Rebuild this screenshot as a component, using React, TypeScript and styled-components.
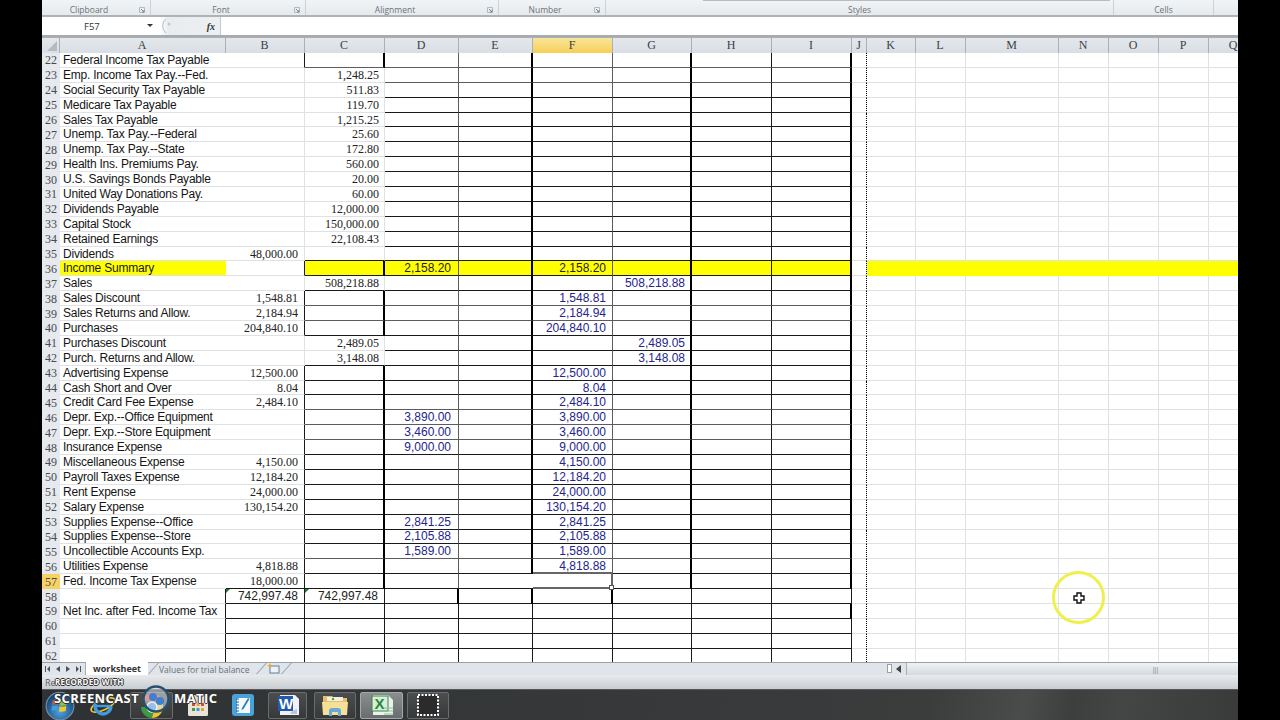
import styled, { createGlobalStyle, css } from "styled-components";

const COLUMNS =
  "18px 166px 79px 80px 74px 74px 80px 79px 80px 80px 15px 49px 50px 93px 50px 50px 50px 50px";
const ROW_HEIGHT = 14.9;

type Line = "none" | "light" | "thin" | "gray" | "wide" | "thick" | "dots";
type Ink = "label" | "serif" | "blue" | "sans";

interface RowData {
  n: number;
  a?: string;
  b?: string;
  c?: string;
  d?: string;
  f?: string;
  g?: string;
}

const rows: RowData[] = [
  { n: 22, a: "Federal Income Tax Payable" },
  { n: 23, a: "Emp. Income Tax Pay.--Fed.", c: "1,248.25" },
  { n: 24, a: "Social Security Tax Payable", c: "511.83" },
  { n: 25, a: "Medicare Tax Payable", c: "119.70" },
  { n: 26, a: "Sales Tax Payable", c: "1,215.25" },
  { n: 27, a: "Unemp. Tax Pay.--Federal", c: "25.60" },
  { n: 28, a: "Unemp. Tax Pay.--State", c: "172.80" },
  { n: 29, a: "Health Ins. Premiums Pay.", c: "560.00" },
  { n: 30, a: "U.S. Savings Bonds Payable", c: "20.00" },
  { n: 31, a: "United Way Donations Pay.", c: "60.00" },
  { n: 32, a: "Dividends Payable", c: "12,000.00" },
  { n: 33, a: "Capital Stock", c: "150,000.00" },
  { n: 34, a: "Retained Earnings", c: "22,108.43" },
  { n: 35, a: "Dividends", b: "48,000.00" },
  { n: 36, a: "Income Summary", d: "2,158.20", f: "2,158.20" },
  { n: 37, a: "Sales", c: "508,218.88", g: "508,218.88" },
  { n: 38, a: "Sales Discount", b: "1,548.81", f: "1,548.81" },
  { n: 39, a: "Sales Returns and Allow.", b: "2,184.94", f: "2,184.94" },
  { n: 40, a: "Purchases", b: "204,840.10", f: "204,840.10" },
  { n: 41, a: "Purchases Discount", c: "2,489.05", g: "2,489.05" },
  { n: 42, a: "Purch. Returns and Allow.", c: "3,148.08", g: "3,148.08" },
  { n: 43, a: "Advertising Expense", b: "12,500.00", f: "12,500.00" },
  { n: 44, a: "Cash Short and Over", b: "8.04", f: "8.04" },
  { n: 45, a: "Credit Card Fee Expense", b: "2,484.10", f: "2,484.10" },
  { n: 46, a: "Depr. Exp.--Office Equipment", d: "3,890.00", f: "3,890.00" },
  { n: 47, a: "Depr. Exp.--Store Equipment", d: "3,460.00", f: "3,460.00" },
  { n: 48, a: "Insurance Expense", d: "9,000.00", f: "9,000.00" },
  { n: 49, a: "Miscellaneous Expense", b: "4,150.00", f: "4,150.00" },
  { n: 50, a: "Payroll Taxes Expense", b: "12,184.20", f: "12,184.20" },
  { n: 51, a: "Rent Expense", b: "24,000.00", f: "24,000.00" },
  { n: 52, a: "Salary Expense", b: "130,154.20", f: "130,154.20" },
  { n: 53, a: "Supplies Expense--Office", d: "2,841.25", f: "2,841.25" },
  { n: 54, a: "Supplies Expense--Store", d: "2,105.88", f: "2,105.88" },
  { n: 55, a: "Uncollectible Accounts Exp.", d: "1,589.00", f: "1,589.00" },
  { n: 56, a: "Utilities Expense", b: "4,818.88", f: "4,818.88" },
  { n: 57, a: "Fed. Income Tax Expense", b: "18,000.00" },
  { n: 58, b: "742,997.48", c: "742,997.48" },
  { n: 59, a: "Net Inc. after Fed. Income Tax" },
  { n: 60 },
  { n: 61 },
  { n: 62 },
];

const headers = ["A", "B", "C", "D", "E", "F", "G", "H", "I", "J", "K", "L", "M", "N", "O", "P", "Q"];
const ribbonGroups = [
  { label: "Clipboard", width: 109, launcher: true },
  { label: "Font", width: 155, launcher: true },
  { label: "Alignment", width: 193, launcher: true },
  { label: "Number", width: 107, launcher: true },
  { label: "Styles", width: 508, launcher: false },
  { label: "Cells", width: 100, launcher: false },
];

const GlobalStyle = createGlobalStyle`
  html, body {
    margin: 0;
    height: 720px;
    overflow: hidden;
    background: #000;
  }
`;

const lineCss = (line: Line) => {
  switch (line) {
    case "light":
      return "1px solid #dfe1e3";
    case "thin":
      return "1px solid #1a1a1a";
    case "gray":
      return "1px solid #5c5c5c";
    case "wide":
      return "2px solid #666";
    case "thick":
      return "2px solid #000";
    case "dots":
      return "1px dotted #000";
    default:
      return "0 none";
  }
};

const Screen = styled.div`
  position: relative;
  display: flex;
  flex-direction: column;
  width: 1196px;
  height: 720px;
  margin-left: 42px;
  overflow: hidden;
  background: #fff;
`;

const Ribbon = styled.div`
  display: flex;
  flex: none;
  height: 15px;
  background: linear-gradient(#f1f4f6, #e6eaed);
  border-bottom: 2px solid #aeb3b8;
`;

const RibbonGroup = styled.div<{ $width: number; $launcher: boolean }>`
  display: flex;
  position: relative;
  align-items: center;
  justify-content: center;
  flex: none;
  width: ${(p) => p.$width}px;
  padding-top: 3px;
  padding-right: ${(p) => (p.$launcher ? 14 : 0)}px;
  box-sizing: border-box;
  border-right: 1px solid #cdd1d5;
  color: #6d7278;
  font: 8.5px "Open Sans", sans-serif;
`;

const Launcher = styled.svg`
  position: absolute;
  right: 5px;
  top: 7px;
  width: 6px;
  height: 6px;
`;

const GalleryEdge = styled.div`
  position: absolute;
  top: 0;
  left: 661px;
  width: 407px;
  height: 1px;
  background: #b9bdc1;
`;

const FormulaBar = styled.div`
  display: flex;
  flex: none;
  align-items: stretch;
  height: 18px;
  background: #fff;
  border-bottom: 2px solid #a7abb0;
`;

const NameBox = styled.div`
  display: flex;
  align-items: center;
  flex: none;
  width: 103px;
  padding-left: 42px;
  box-sizing: border-box;
  color: #333;
  font: 9.5px "Open Sans", sans-serif;
`;

const FormulaTools = styled.div`
  display: flex;
  align-items: center;
  justify-content: space-between;
  flex: none;
  width: 66px;
  padding: 0 5px 0 5px;
  box-sizing: border-box;
  background: linear-gradient(90deg, #fff 0, #fff 8%, #e9ecef 20%, #edf0f2 100%);
  border-right: 1px solid #c5c9cd;
  color: #333;
  font: italic 700 10px "Liberation Serif", serif;
`;

const HeaderRow = styled.div`
  display: grid;
  flex: none;
  grid-template-columns: ${COLUMNS};
  height: 16px;
`;

const HeaderCell = styled.div<{ $active?: boolean }>`
  display: flex;
  align-items: center;
  justify-content: center;
  padding-right: 1px;
  border-right: 1px solid #a9b0b8;
  border-top: 1px solid #a9b0b8;
  color: #3b3f45;
  font: 12px "Liberation Serif", serif;
  background: ${(p) =>
    p.$active ? "linear-gradient(#f9e59a, #f6cf57)" : "linear-gradient(#e4e8ec, #d9dee4)"};
`;

const Corner = styled(HeaderCell)`
  align-items: flex-end;
  justify-content: flex-end;
  padding: 0 2px 2px 0;
`;

const Sheet = styled.div`
  position: relative;
  flex: none;
  height: 609px;
  overflow: hidden;
`;

const Row = styled.div`
  display: grid;
  grid-template-columns: ${COLUMNS};
  grid-template-rows: ${ROW_HEIGHT}px;
  height: ${ROW_HEIGHT}px;
`;

const RowNumber = styled.div<{ $active?: boolean }>`
  display: flex;
  align-items: center;
  justify-content: center;
  box-sizing: border-box;
  padding-top: 1px;
  color: #474b50;
  font: 12px/13px "Liberation Serif", serif;
  background: ${(p) => (p.$active ? "#f6d264" : "#e6e9ed")};
`;

const inkStyles: Record<Ink, ReturnType<typeof css>> = {
  label: css`
    justify-content: flex-start;
    padding-left: 3px;
    color: #151515;
    font: 12px/13px "Liberation Sans", Arial, sans-serif;
    letter-spacing: -0.22px;
  `,
  serif: css`
    justify-content: flex-end;
    color: #222;
    font: 12px/13px "Liberation Serif", serif;
  `,
  blue: css`
    justify-content: flex-end;
    color: #24248c;
    font: 12px/13px "Liberation Sans", Arial, sans-serif;
  `,
  sans: css`
    justify-content: flex-end;
    color: #222;
    font: 12px/13px "Liberation Sans", Arial, sans-serif;
  `,
};

const Cell = styled.div<{
  $right: Line;
  $bottom: Line;
  $ink?: Ink;
  $pad?: number;
  $fill?: boolean;
  $flag?: boolean;
  $handle?: boolean;
}>`
  display: flex;
  position: relative;
  align-items: center;
  box-sizing: border-box;
  min-width: 0;
  height: ${ROW_HEIGHT}px;
  padding-top: 1px;
  white-space: nowrap;
  border-right: ${(p) => lineCss(p.$right)};
  border-bottom: ${(p) => lineCss(p.$bottom)};
  background: ${(p) => (p.$fill ? "#ffff00" : "#fff")};
  ${(p) => inkStyles[p.$ink ?? "label"]}
  ${(p) => p.$pad && `padding-right: ${p.$pad}px;`}
  ${(p) =>
    p.$flag &&
    css`
      &::before {
        content: "";
        position: absolute;
        top: 0;
        left: 0;
        border-top: 4px solid #1f7a33;
        border-right: 4px solid transparent;
      }
    `}
  ${(p) =>
    p.$handle &&
    css`
      &::after {
        content: "";
        position: absolute;
        right: -3px;
        bottom: -3px;
        width: 3px;
        height: 3px;
        background: #fff;
        border: 1px solid #555;
        z-index: 1;
      }
    `}
`;

const PointerRing = styled.div`
  display: flex;
  position: absolute;
  top: 518px;
  left: 1010px;
  align-items: center;
  justify-content: center;
  box-sizing: border-box;
  width: 53px;
  height: 53px;
  border: 3px solid #eef04e;
  border-radius: 50%;
`;

const TabBar = styled.div`
  display: flex;
  flex: none;
  align-items: stretch;
  height: 13px;
  background: #dfe5ea;
  border-top: 1px solid #9aa0a6;
  box-sizing: border-box;
`;

const SheetNav = styled.div`
  display: flex;
  flex: none;
  align-items: center;
  justify-content: space-between;
  width: 43px;
  padding: 0 4px 0 3px;
  box-sizing: border-box;
`;

const ActiveTab = styled.div`
  display: flex;
  flex: none;
  align-items: center;
  justify-content: center;
  width: 62px;
  height: 13px;
  margin-top: -1px;
  background: #fff;
  border-left: 1px solid #a5abb1;
  color: #333;
  font: 700 9px "Open Sans", sans-serif;
`;

const Slash = styled.span`
  flex: none;
  width: 1px;
  height: 15px;
  margin: -2px 5px 0 5px;
  background: #a5abb1;
  transform: rotate(42deg);
`;

const SheetTab = styled.div`
  display: flex;
  flex: none;
  align-items: center;
  width: 97px;
  color: #6b7076;
  font: 8.5px "Open Sans", sans-serif;
  white-space: nowrap;
`;

const TabGap = styled.div`
  flex: 1;
`;

const SplitBox = styled.div`
  flex: none;
  width: 5px;
  height: 9px;
  margin: 1px 3px 0 0;
  background: #fff;
  border: 1px solid #9aa0a6;
  box-sizing: border-box;
`;

const ScrollArrow = styled.svg`
  flex: none;
  width: 8px;
  height: 8px;
  margin: 2px 3px 0 0;
`;

const ScrollThumb = styled.div`
  display: flex;
  flex: none;
  align-items: center;
  justify-content: center;
  width: 332px;
  padding-left: 166px;
  box-sizing: border-box;
  background: linear-gradient(#f0f3f5, #d5dade);
  border-left: 1px solid #aab0b6;
  color: #8b9197;
  font: 7px "Liberation Sans", sans-serif;
`;

const StatusBar = styled.div`
  display: flex;
  flex: none;
  align-items: center;
  height: 15px;
  padding-left: 3px;
  box-sizing: border-box;
  background: linear-gradient(#e9ebed, #c8ccd0);
  border-bottom: 1px solid #55585c;
  color: #5a5e63;
  font: 9px "Open Sans", sans-serif;
`;

const Taskbar = styled.div`
  display: flex;
  flex: none;
  align-items: center;
  height: 30px;
  padding-left: 2px;
  box-sizing: border-box;
  background: linear-gradient(
    100deg,
    #2f3234 0,
    #383a3b 60%,
    #3b3c3c 74%,
    #4a4c4b 82%,
    #3d3e3e 86%,
    #444545 90%,
    #393a3a 100%
  );
`;

const TaskIcon = styled.div<{ $width: number; $gap?: number; $framed?: boolean; $lit?: boolean }>`
  display: flex;
  align-items: center;
  justify-content: center;
  flex: none;
  width: ${(p) => p.$width}px;
  height: 27px;
  margin-left: ${(p) => p.$gap ?? 0}px;
  box-sizing: border-box;
  border-radius: 2px;
  ${(p) =>
    p.$framed &&
    css`
      border: 1px solid #6a6c6d;
      background: linear-gradient(#4b4d4e, #363839);
    `}
  ${(p) =>
    p.$lit &&
    css`
      background: linear-gradient(#8b8e8e, #6a6d6d);
      border-color: #a5a8a8;
    `}
`;

const Watermark = styled.div<{ $top: number; $left: number; $size: number }>`
  position: absolute;
  top: ${(p) => p.$top}px;
  left: ${(p) => p.$left}px;
  color: #fff;
  font: 700 ${(p) => p.$size}px "Open Sans", sans-serif;
  letter-spacing: 0.4px;
  white-space: nowrap;
  text-shadow: 1px 0 #333, -1px 0 #333, 0 1px #333, 0 -1px #333;
`;

const RecordedWith = styled(Watermark)`
  letter-spacing: 0.2px;
`;

const WatermarkLogo = styled.svg`
  position: absolute;
  top: 685px;
  left: 100px;
  width: 28px;
  height: 28px;
`;

const LauncherIcon = () => (
  <Launcher viewBox="0 0 6 6">
    <path d="M0.5 0.5H5.5V5.5H0.5Z" fill="none" stroke="#b4b9be" />
    <path d="M2 2L5 5M3 5H5V3" fill="none" stroke="#7b8a9a" />
  </Launcher>
);

const NavGlyph = ({ d }: { d: string }) => (
  <svg width="6" height="8" viewBox="0 0 6 8">
    <path d={d} fill="#4d5258" />
  </svg>
);

const WindowsOrb = () => (
  <svg width="32" height="30" viewBox="0 0 30 28">
    <defs>
      <radialGradient id="orb" cx="50%" cy="70%" r="65%">
        <stop offset="0" stopColor="#4fa3df" />
        <stop offset="1" stopColor="#0e3f70" />
      </radialGradient>
    </defs>
    <circle cx="15" cy="15" r="13" fill="url(#orb)" stroke="#7d93a5" />
    <path d="M8 10Q11 8 14 9.5L13.4 14Q10.5 12.8 7.6 14Z" fill="#e4542f" />
    <path d="M15 9.7Q18 11 21.5 9.5L21 14Q18 15.3 14.6 14.2Z" fill="#8cc63f" />
    <path d="M7.5 15Q10.5 13.8 13.3 15L12.8 19.5Q10 18.4 7 19.6Z" fill="#3b9fe0" />
    <path d="M14.5 15.2Q18 16.3 20.9 15L20.4 19.6Q17 21 14 19.8Z" fill="#f5c62c" />
  </svg>
);

const IeIcon = () => (
  <svg width="30" height="24" viewBox="0 0 30 24">
    <ellipse cx="15" cy="12" rx="13" ry="5" fill="none" stroke="#f1c232" strokeWidth="1.6" transform="rotate(-25 15 12)" />
    <circle cx="15" cy="13" r="8" fill="none" stroke="#3f9be0" strokeWidth="3.4" strokeDasharray="38 12" />
    <path d="M8 13H22" stroke="#3f9be0" strokeWidth="2.4" />
  </svg>
);

const ChromeIcon = () => (
  <svg width="28" height="26" viewBox="0 0 28 26">
    <path d="M3 15A11 11 0 0 0 14 26L19 17L9 15Z" fill="#3c9a45" />
    <path d="M14 26A11 11 0 0 0 25 15L25 9L17 15Z" fill="#f2c230" />
    <path d="M4 8A11 11 0 0 1 24 8L14 10Z" fill="#d8432f" />
    <circle cx="14" cy="15" r="5" fill="#4a8fe0" stroke="#fff" strokeWidth="1.5" />
  </svg>
);

const TilesIcon = () => (
  <svg width="24" height="24" viewBox="0 0 24 24">
    <rect x="2" y="2" width="20" height="21" rx="1.5" fill="#e8e4da" />
    <rect x="6" y="10" width="3" height="3" fill="#d44a34" />
    <rect x="10.5" y="10" width="3" height="3" fill="#e3a72b" />
    <rect x="15" y="10" width="3" height="3" fill="#d44a34" />
    <rect x="6" y="15" width="3" height="3" fill="#4c9a45" />
    <rect x="10.5" y="15" width="3" height="3" fill="#4a8fe0" />
    <rect x="15" y="15" width="3" height="3" fill="#e3a72b" />
  </svg>
);

const NoteIcon = () => (
  <svg width="24" height="24" viewBox="0 0 24 24">
    <rect x="1" y="1" width="22" height="22" rx="3" fill="#4aa3d8" />
    <rect x="6" y="5" width="13" height="15" fill="#f4f9fc" />
    <path d="M5 6H8M5 9H8M5 12H8M5 15H8M5 18H8" stroke="#1e5f8f" />
    <path d="M11 15L17 5L18.5 6L12.5 16L10.5 17Z" fill="#2b7fb8" />
  </svg>
);

const WordIcon = () => (
  <svg width="26" height="24" viewBox="0 0 26 24">
    <path d="M5 2H20L24 6V22H5Z" fill="#eef2f7" />
    <rect x="3" y="3" width="15" height="15" fill="#2458ae" />
    <text x="4" y="16" fontFamily="Liberation Sans" fontWeight="700" fontSize="15" fill="#fff">
      W
    </text>
    <path d="M17 18L22 16V21H15Z" fill="#b9c6d8" />
  </svg>
);

const FolderIcon = () => (
  <svg width="30" height="24" viewBox="0 0 30 24">
    <path d="M3 3H12L14 5H27V22H3Z" fill="#e3c069" />
    <rect x="7" y="4" width="16" height="4" fill="#f3efe2" />
    <circle cx="13" cy="6" r="1.2" fill="#5a9a4a" />
    <path d="M2 9H28L27 22H3Z" fill="#f6df97" />
    <path d="M9 23V18Q9 15 12 15H18Q21 15 21 18V23H18V19H12V23Z" fill="#69a9d8" />
  </svg>
);

const ExcelIcon = () => (
  <svg width="26" height="24" viewBox="0 0 26 24">
    <path d="M4 2H19L24 7V22H4Z" fill="#eaf3ea" />
    <rect x="3" y="3" width="16" height="15" fill="#dcecd8" stroke="#2f8a45" />
    <text x="5.5" y="16" fontFamily="Liberation Sans" fontWeight="700" fontSize="15" fill="#1f8a3c">
      X
    </text>
    <path d="M15 15H24M15 18H24M15 21H24" stroke="#8cbf96" />
  </svg>
);

const SnipIcon = () => (
  <svg width="24" height="24" viewBox="0 0 24 24">
    <rect x="2" y="2" width="20" height="20" fill="#2b2b2b" stroke="#fff" strokeWidth="2" strokeDasharray="2 1.5" />
  </svg>
);

const App = () => {
  const gray = [22, 23, 38, 39, 45, 46, 47, 55];

  const renderRow = (row: RowData) => {
    const { n } = row;
    const hot = n === 36;
    const boxed = n === 22 || hot || (n >= 38 && n <= 40) || n >= 43;
    const dark: Line = gray.includes(n) ? "gray" : "thin";
    const cClosed = boxed || n === 35 || n === 37 || n === 42;
    const lower = n >= 59;
    const vertical = (normal: Line, at58: Line): Line => (lower ? "thin" : n === 58 ? at58 : normal);

    return (
      <Row key={n}>
        <RowNumber $active={n === 57}>{n}</RowNumber>
        <Cell $right={n >= 58 ? "thin" : "none"} $bottom="light" $fill={hot}>
          {row.a}
        </Cell>
        <Cell
          $ink={n === 58 ? "sans" : "serif"}
          $pad={6}
          $flag={n === 58}
          $right={boxed ? "thin" : "light"}
          $bottom={n >= 57 ? "thin" : "light"}
        >
          {row.b}
        </Cell>
        <Cell
          $ink={n === 58 ? "sans" : "serif"}
          $pad={n === 58 ? 6 : 5}
          $flag={n === 58}
          $fill={hot}
          $right={n >= 58 ? "thin" : boxed ? "thick" : "light"}
          $bottom={n >= 57 ? "thin" : cClosed ? dark : "light"}
        >
          {row.c}
        </Cell>
        <Cell $ink={hot ? "sans" : "blue"} $pad={7} $fill={hot} $right={vertical("gray", "thick")} $bottom={dark}>
          {row.d}
        </Cell>
        <Cell
          $fill={hot}
          $right={n === 57 ? "none" : vertical("thick", "thick")}
          $bottom={dark}
        />
        <Cell
          $ink={hot ? "sans" : "blue"}
          $pad={6}
          $fill={hot}
          $handle={n === 57}
          $right={n === 57 ? "wide" : vertical("gray", "thick")}
          $bottom={n === 56 || n === 57 ? "wide" : dark}
        >
          {row.f}
        </Cell>
        <Cell $ink={hot ? "sans" : "blue"} $pad={5} $fill={hot} $right={vertical("thick", "thin")} $bottom={dark}>
          {row.g}
        </Cell>
        <Cell $fill={hot} $right="thin" $bottom={dark} />
        <Cell $fill={hot} $right={n === 59 ? "thick" : vertical("thick", "thin")} $bottom={dark} />
        <Cell $right="dots" $bottom="light" />
        {[0, 1, 2, 3, 4, 5, 6].map((i) => (
          <Cell key={i} $fill={hot} $right={hot ? "none" : "light"} $bottom={hot ? "none" : "light"} />
        ))}
      </Row>
    );
  };

  return (
    <>
      <GlobalStyle />
      <Screen>
        <Ribbon>
          {ribbonGroups.map((group) => (
            <RibbonGroup key={group.label} $width={group.width} $launcher={group.launcher}>
              {group.label}
              {group.launcher && <LauncherIcon />}
            </RibbonGroup>
          ))}
          <GalleryEdge />
        </Ribbon>

        <FormulaBar>
          <NameBox>F57</NameBox>
          <svg width="10" height="16" viewBox="0 0 10 16">
            <path d="M2 7H8L5 10Z" fill="#333" />
          </svg>
          <FormulaTools>
            <svg width="14" height="16" viewBox="0 0 14 16">
              <path d="M6 1A9 9 0 0 0 6 15" fill="none" stroke="#b9bec3" />
              <circle cx="9" cy="6" r="1.5" fill="#c4c8cc" />
            </svg>
            <span>fx</span>
          </FormulaTools>
        </FormulaBar>

        <HeaderRow>
          <Corner>
            <svg width="10" height="10" viewBox="0 0 10 10">
              <path d="M10 0V10H0Z" fill="#b5bbc1" />
            </svg>
          </Corner>
          {headers.map((letter) => (
            <HeaderCell key={letter} $active={letter === "F"}>
              {letter}
            </HeaderCell>
          ))}
        </HeaderRow>

        <Sheet>
          {rows.map(renderRow)}
          <PointerRing>
            <svg width="12" height="12" viewBox="0 0 12 12">
              <path
                d="M4 1H8V4H11V8H8V11H4V8H1V4H4Z"
                fill="#fff"
                stroke="#111"
                strokeWidth="1.4"
              />
            </svg>
          </PointerRing>
        </Sheet>

        <TabBar>
          <SheetNav>
            <NavGlyph d="M0 1H1V7H0ZM5 1V7L2 4Z" />
            <NavGlyph d="M5 1V7L1 4Z" />
            <NavGlyph d="M1 1V7L5 4Z" />
            <NavGlyph d="M5 1H6V7H5ZM1 1V7L4 4Z" />
          </SheetNav>
          <ActiveTab>worksheet</ActiveTab>
          <Slash />
          <SheetTab>Values for trial balance</SheetTab>
          <Slash />
          <svg width="14" height="12" viewBox="0 0 14 12">
            <rect x="3" y="3" width="9" height="7" fill="#eef2f6" stroke="#5f7f9f" />
            <path d="M3 0L4 2L6 2.5L4 3.5L3 5.5L2 3.5L0 2.5L2 2Z" fill="#e5a93a" />
          </svg>
          <Slash />
          <TabGap />
          <SplitBox />
          <ScrollArrow viewBox="0 0 8 8">
            <path d="M6 0V8L1 4Z" fill="#3f4448" />
          </ScrollArrow>
          <ScrollThumb>|||</ScrollThumb>
        </TabBar>

        <StatusBar>Re</StatusBar>

        <Taskbar>
          <TaskIcon $width={32}>
            <WindowsOrb />
          </TaskIcon>
          <TaskIcon $width={54}>
            <IeIcon />
          </TaskIcon>
          <TaskIcon $width={43} $framed>
            <ChromeIcon />
          </TaskIcon>
          <TaskIcon $width={49}>
            <TilesIcon />
          </TaskIcon>
          <TaskIcon $width={42}>
            <NoteIcon />
          </TaskIcon>
          <TaskIcon $width={39} $gap={4} $framed>
            <WordIcon />
          </TaskIcon>
          <TaskIcon $width={42} $gap={7} $framed>
            <FolderIcon />
          </TaskIcon>
          <TaskIcon $width={43} $gap={4} $framed $lit>
            <ExcelIcon />
          </TaskIcon>
          <TaskIcon $width={42} $gap={4} $framed>
            <SnipIcon />
          </TaskIcon>
        </Taskbar>

        <RecordedWith $top={676} $left={13} $size={8}>
          RECORDED WITH
        </RecordedWith>
        <Watermark $top={689} $left={12} $size={13}>
          SCREENCAST
        </Watermark>
        <WatermarkLogo viewBox="0 0 28 28">
          <circle cx="14" cy="14" r="12.5" fill="#dfe6ec" fillOpacity="0.55" stroke="#27506e" strokeWidth="2.5" />
          <circle cx="11" cy="12" r="4" fill="#3f7fd0" />
          <circle cx="18" cy="16" r="4" fill="#3f7fd0" />
        </WatermarkLogo>
        <Watermark $top={689} $left={132} $size={13}>
          MATIC
        </Watermark>
      </Screen>
    </>
  );
};

export default App;
